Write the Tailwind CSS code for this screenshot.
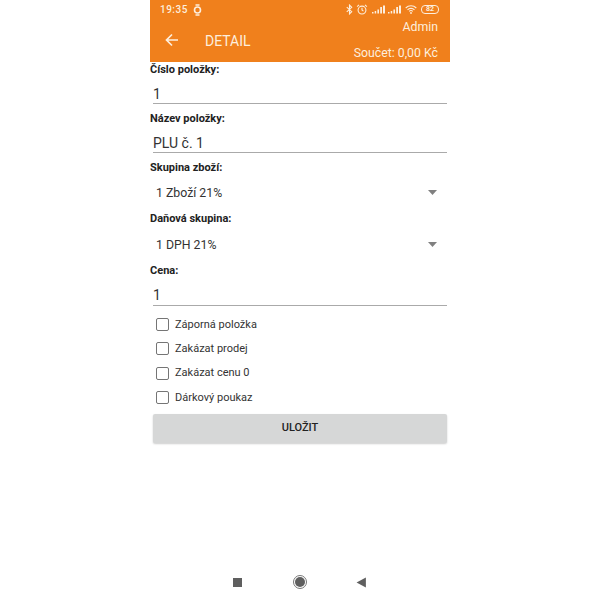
<!DOCTYPE html>
<html><head><meta charset="utf-8">
<script src="https://cdn.jsdelivr.net/npm/@tailwindcss/browser@4"></script>
</head>
<body class="bg-white">
<div class="relative w-[300px] h-[600px] mx-auto bg-white font-['Roboto',sans-serif] text-[#222]">
  <header class="h-[61.500px] bg-[#f0801c] text-white flex flex-col">
    <div class="h-[19px] pl-[10px] pr-[11px] flex items-center justify-between text-[#fdeedd]">
      <div class="flex items-center gap-[5px] text-[10px] font-medium tracking-[0.5px]">
        <span>19:35</span>
        <svg width="9" height="12" viewBox="0 0 9 12" fill="none" stroke="currentColor"><path d="M2.500 1h4M2.500 11h4" stroke-width="1.300"/><circle cx="4.500" cy="6" r="3" stroke-width="1.600"/></svg>
      </div>
      <div class="flex items-center gap-[3.500px]">
        <svg width="7" height="11" viewBox="0 0 6 10" fill="none" stroke="currentColor" stroke-width="1"><path d="M0.500 2.800 5 7 3 9V1l2 2L.5 7.200"/></svg>
        <svg width="12" height="11" viewBox="0 0 11 10" fill="none" stroke="currentColor" stroke-width="1"><circle cx="5.500" cy="5.500" r="3.600"/><path d="M5.500 3.500v2l1.300 1M1 2.400 2.800.8M10 2.400 8.200.8"/></svg>
        <svg width="13" height="9" viewBox="0 0 13 9" fill="currentColor"><path d="M0 7h1.500v1.500H0zM2.700 6h1.500v2.500H2.700zM5.400 4.500h1.600v4H5.400zM8.200 2h1.800v6.500H8.200zM11 .5h2v8h-2z"/></svg>
        <svg width="13" height="9" viewBox="0 0 13 9" fill="currentColor"><path d="M0 7h1.500v1.500H0zM2.700 6h1.500v2.500H2.700zM5.400 4.500h1.600v4H5.400zM8.200 2h1.800v6.500H8.200zM11 .5h2v8h-2z"/></svg>
        <svg width="12" height="9" viewBox="0 0 12 9" fill="none" stroke="currentColor" stroke-width="1.100"><path d="M.7 3a7.500 7.500 0 0 1 10.600 0M2.500 4.800a5 5 0 0 1 7 0M4.200 6.400a2.600 2.600 0 0 1 3.600 0"/><circle cx="6" cy="8" r=".9" fill="currentColor" stroke="none"/></svg>
        <div class="ml-[1px] w-[18px] h-[9px] rounded-[4px] border border-current flex items-center justify-center"><span class="text-[7px] leading-none font-bold">82</span></div>
      </div>
    </div>
    <div class="relative flex-1 flex items-center pl-[15px]">
      <svg width="14" height="14" viewBox="0 0 14 14" fill="none" stroke="#fdeedd" stroke-width="1.700"><path d="M13 7H1.500M7 1.500 1.500 7 7 12.500"/></svg>
      <span class="ml-[26px] mt-px text-[14px] leading-none text-[#fdeedd]">DETAIL</span>
      <div class="absolute right-[12px] top-0 bottom-0 flex flex-col items-end text-[12.300px] leading-none text-[#fdeedd]">
        <span class="mt-[2px]">Admin</span>
        <span class="mt-[14px]">Součet: 0,00 Kč</span>
      </div>
    </div>
  </header>
  <main class="flex flex-col">
    <label class="h-[15px] text-[11px] leading-[15px] font-bold">Číslo položky:</label>
    <div class="mx-[3px] h-[27px] pt-[7px] text-[14px] leading-[20px] text-[#333] border-b-[1.500px] border-[#aaa]">1</div>
    <label class="h-[15px] mt-[7px] text-[11px] leading-[15px] font-bold">Název položky:</label>
    <div class="mx-[3px] h-[27px] pt-[7px] text-[14px] leading-[20px] text-[#333] border-b-[1.500px] border-[#aaa]">PLU č. 1</div>
    <label class="h-[15px] mt-[7px] text-[11px] leading-[15px] font-bold">Skupina zboží:</label>
    <div class="h-[36px] pl-[6px] pr-[13px] flex items-center justify-between text-[12.300px] text-[#333]">
      <span class="mt-[2px]">1 Zboží 21%</span>
      <svg width="9" height="5" viewBox="0 0 9 5" fill="#808080"><path d="M0 0h9L4.500 5z"/></svg>
    </div>
    <label class="h-[15px] text-[11px] leading-[15px] font-bold">Daňová skupina:</label>
    <div class="h-[37px] pl-[6px] pr-[13px] flex items-center justify-between text-[12.300px] text-[#333]">
      <span class="mt-[2px]">1 DPH 21%</span>
      <svg width="9" height="5" viewBox="0 0 9 5" fill="#808080"><path d="M0 0h9L4.500 5z"/></svg>
    </div>
    <label class="h-[15px] text-[11px] leading-[15px] font-bold">Cena:</label>
    <div class="mx-[3px] h-[28px] pt-[7px] text-[14px] leading-[20px] text-[#333] border-b-[1.500px] border-[#aaa]">1</div>
    <div class="flex flex-col pl-[6px] mt-[7px] text-[11px] text-[#333]">
      <div class="h-[24.300px] flex items-center gap-[6px]"><span class="w-[13px] h-[13px] rounded-[2px] border-[1.500px] border-[#757575]"></span><span class="mt-px">Záporná položka</span></div>
      <div class="h-[24.300px] flex items-center gap-[6px]"><span class="w-[13px] h-[13px] rounded-[2px] border-[1.500px] border-[#757575]"></span><span class="mt-px">Zakázat prodej</span></div>
      <div class="h-[24.300px] flex items-center gap-[6px]"><span class="w-[13px] h-[13px] rounded-[2px] border-[1.500px] border-[#757575]"></span><span class="mt-px">Zakázat cenu 0</span></div>
      <div class="h-[24.300px] flex items-center gap-[6px]"><span class="w-[13px] h-[13px] rounded-[2px] border-[1.500px] border-[#757575]"></span><span class="mt-px">Dárkový poukaz</span></div>
    </div>
    <button class="mx-[3px] mt-[4px] h-[29px] rounded-[2px] bg-[#d6d7d7] shadow-[0_1px_2px_rgba(0,0,0,0.2)] text-[11px] font-medium text-[#222]">ULOŽIT</button>
  </main>
  <nav class="absolute left-0 right-0 top-[572px] h-[20px] flex items-center">
    <span class="absolute left-[83px] w-[9px] h-[9px] bg-[#5f5f5f]"></span>
    <span class="absolute left-[143px] w-[14px] h-[14px] rounded-full border border-[#777] flex items-center justify-center"><span class="w-[10px] h-[10px] rounded-full bg-[#5f5f5f]"></span></span>
    <svg class="absolute left-[206px]" width="11" height="11" viewBox="0 0 10 10" fill="#5f5f5f"><path d="M9 0.500v9L0.500 5z"/></svg>
  </nav>
</div>
</body></html>
